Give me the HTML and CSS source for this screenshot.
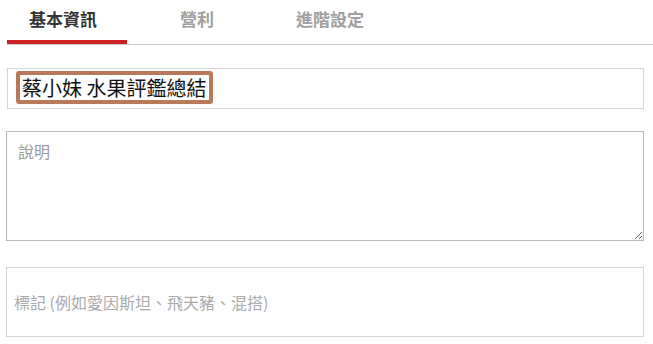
FILE: index.html
```html
<!DOCTYPE html>
<html lang="zh-Hant">
<head>
<meta charset="utf-8">
<title>基本資訊</title>
<link rel="stylesheet" href="styles.css">
</head>
<body>
<div class="page">
  <nav class="tabs">
    <div class="tab tab-active">基本資訊</div>
    <div class="tab tab-profit">營利</div>
    <div class="tab tab-adv">進階設定</div>
  </nav>
  <div class="form">
    <div class="title-field"><span class="title-mark">蔡小妹 水果評鑑總結</span></div>
    <textarea class="desc-field" placeholder="說明"></textarea>
    <input class="tag-field" type="text" placeholder="標記 (例如愛因斯坦、飛天豬、混搭)">
  </div>
</div>
</body>
</html>
```
FILE: styles.css
```css
* { box-sizing: border-box; }
html, body {
  margin: 0;
  background: #ffffff;
  font-family: "Noto Sans CJK TC", "Noto Sans", sans-serif;
}
.page {
  padding-left: 7px;
}
.tabs {
  display: flex;
  border-bottom: 1px solid #cccccc;
  height: 45px;
}
.tab {
  height: 44px;
  padding: 10px 0 0 22px;
  font-size: 17px;
  line-height: 17px;
  font-weight: 700;
  color: #a0a0a0;
  border-bottom: 4px solid transparent;
}
.tab-active {
  width: 120px;
  color: #333333;
  border-bottom-color: #cc1f26;
}
.tab-profit {
  width: 116px;
  margin-left: 31px;
}
.tab-adv {
  width: 120px;
}
.form {
  width: 637px;
  display: flex;
  flex-direction: column;
}
.title-field {
  margin-top: 23px;
  height: 41px;
  border: 1px solid #d4d4d4;
  padding: 2px 0 0 8px;
  display: flex;
  align-items: flex-start;
}
.title-mark {
  display: block;
  border: 4px solid #b87a5a;
  border-radius: 3px;
  padding: 0 3px 0 2px;
  height: 33px;
  font-size: 20px;
  line-height: 25px;
  color: #111111;
  font-weight: 400;
  white-space: nowrap;
}
.desc-field {
  margin: 22px 0 0 -1px;
  width: 638px;
  height: 110px;
  border: 1px solid #b8b8b8;
  padding: 9px 11px;
  font-family: "Noto Sans CJK TC", "Noto Sans", sans-serif;
  font-size: 16px;
  line-height: 20px;
  color: #333;
  outline: none;
  display: block;
}
.desc-field::placeholder {
  color: #9a9a9a;
}
.tag-field {
  margin: 26px 0 0 -1px;
  width: 638px;
  height: 70px;
  border: 1px solid #d4d4d4;
  padding: 0 7px;
  font-family: "Noto Sans CJK TC", "Noto Sans", sans-serif;
  font-size: 16px;
  color: #333;
  outline: none;
  display: block;
}
.tag-field::placeholder {
  color: #aaaaaa;
}
```
